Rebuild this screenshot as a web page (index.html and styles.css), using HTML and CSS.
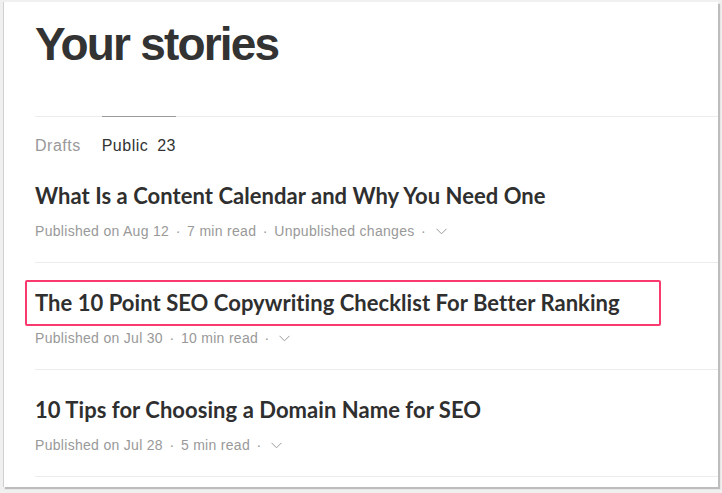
FILE: index.html
```html
<!DOCTYPE html>
<html lang="en">
<head>
    <meta charset="UTF-8">
    <meta name="viewport" content="width=device-width, initial-scale=1.0">
    <title>Your stories</title>
    <link rel="stylesheet" href="styles.css">
</head>
<body>
    <div class="card">
        <h1 class="page-title">Your stories</h1>

        <!-- Tabs -->
        <nav class="tabs">
            <a class="tab" href="#">Drafts</a>
            <a class="tab is-active" href="#">Public <span class="tab-count">23</span></a>
        </nav>

        <!-- Story list -->
        <ul class="stories">
            <li class="story">
                <h3 class="story-title">What Is a Content Calendar and Why You Need One</h3>
                <div class="story-meta">
                    Published on Aug 12<span class="dot">·</span>7 min read<span class="dot">·</span>Unpublished changes<span class="dot">·</span>
                    <svg class="chevron" width="11" height="7" viewBox="0 0 11 7"><polyline points="0.5,0.8 5.5,5.8 10.5,0.8" fill="none" stroke="#999" stroke-width="1"/></svg>
                </div>
            </li>
            <li class="story">
                <h3 class="story-title is-highlighted">The 10 Point SEO Copywriting Checklist For Better Ranking</h3>
                <div class="story-meta">
                    Published on Jul 30<span class="dot">·</span>10 min read<span class="dot">·</span>
                    <svg class="chevron" width="11" height="7" viewBox="0 0 11 7"><polyline points="0.5,0.8 5.5,5.8 10.5,0.8" fill="none" stroke="#999" stroke-width="1"/></svg>
                </div>
            </li>
            <li class="story">
                <h3 class="story-title">10 Tips for Choosing a Domain Name for SEO</h3>
                <div class="story-meta">
                    Published on Jul 28<span class="dot">·</span>5 min read<span class="dot">·</span>
                    <svg class="chevron" width="11" height="7" viewBox="0 0 11 7"><polyline points="0.5,0.8 5.5,5.8 10.5,0.8" fill="none" stroke="#999" stroke-width="1"/></svg>
                </div>
            </li>
        </ul>
    </div>
</body>
</html>
```

FILE: styles.css
```css
html, body {
    height: 100%;
}
body {
    margin: 0;
    padding: 2px 4px 6px 3px;
    box-sizing: border-box;
    background-color: #f0f0f0;
    font-family: "Liberation Sans", Arial, sans-serif;
    color: #333;
}
.card {
    height: 485px;
    background-color: #fff;
    border-left: 1px solid #d0d0d0;
    box-shadow: 2px 2px 1px #bdbdbd;
    padding-left: 31px;
    overflow: hidden;
}
.page-title {
    margin: 14px 0 0;
    font-size: 46px;
    line-height: 56px;
    font-weight: bold;
    letter-spacing: -1.8px;
    color: #333;
}
.tabs {
    display: flex;
    gap: 21px;
    margin-top: 44px;
    border-top: 1px solid #ececec;
}
.tab {
    margin-top: -1px;
    padding-top: 19px;
    border-top: 1px solid transparent;
    font-size: 16px;
    line-height: 20px;
    letter-spacing: 0.5px;
    color: #999;
    text-decoration: none;
}
.tab.is-active {
    border-top-color: #9a9a9a;
    color: #333;
}
.tab-count {
    margin-left: 4px;
}
.stories {
    list-style: none;
    margin: 0;
    padding: 0;
}
.story {
    padding: 26px 0 21px;
    border-bottom: 1px solid #ececec;
}
.story-title {
    position: relative;
    margin: 0;
    font-family: Lato, "Liberation Sans", sans-serif;
    font-size: 22px;
    line-height: 28px;
    font-weight: bold;
    letter-spacing: 0.05px;
    color: #2f2f2f;
}
.story-title.is-highlighted::after {
    content: "";
    position: absolute;
    top: -9px;
    left: -10px;
    width: 632px;
    height: 42px;
    border: 2px solid #fa3a6e;
    border-radius: 2px;
}
.story-meta {
    margin-top: 11px;
    font-size: 14px;
    line-height: 20px;
    letter-spacing: 0.3px;
    color: #999;
    white-space: nowrap;
}
.dot {
    margin: 0 6.5px;
}
.chevron {
    margin-left: -1px;
    vertical-align: 1px;
}
```
